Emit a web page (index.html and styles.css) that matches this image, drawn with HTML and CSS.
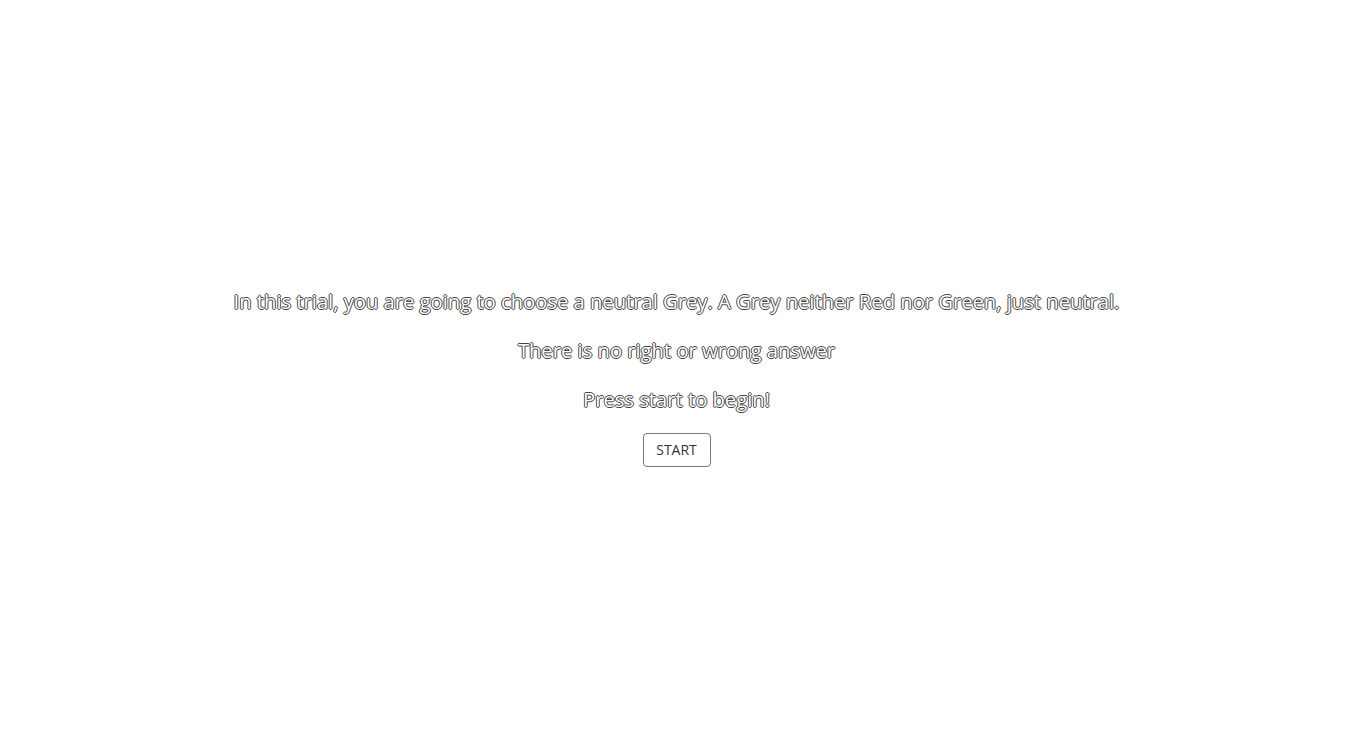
FILE: index.html
```html
<!DOCTYPE html>
<html>
<head>
<meta charset="utf-8">
<link rel="stylesheet" href="styles.css">
</head>
<body>
<main class="intro">
  <p class="line">In this trial, you are going to choose a neutral Grey. A Grey neither Red nor Green, just neutral.</p>
  <p class="line">There is no right or wrong answer</p>
  <p class="line last">Press start to begin!</p>
  <button class="start">START</button>
</main>
</body>
</html>
```
FILE: styles.css
```css
html, body {
  margin: 0;
  padding: 0;
  background: #ffffff;
}
.intro {
  width: 1353px;
  height: 748px;
  box-sizing: border-box;
  padding-top: 5px;
  display: flex;
  flex-direction: column;
  align-items: center;
  justify-content: center;
  font-family: "Open Sans", sans-serif;
}
.line {
  margin: 0 0 21px 0;
  font-size: 20.2px;
  line-height: 28px;
  color: #ffffff;
  text-shadow: -1px 0 0 #444, 1px 0 0 #444, 0 -1px 0 #444, 0 1px 0 #444;
  text-align: center;
}
.line.last {
  margin-bottom: 18px;
}
.start {
  margin-top: 2px;
  width: 68px;
  height: 34px;
  padding: 0;
  font-family: "Open Sans", sans-serif;
  font-size: 14px;
  color: #333;
  background: #fff;
  border: 1px solid #777;
  border-radius: 4px;
}
```
